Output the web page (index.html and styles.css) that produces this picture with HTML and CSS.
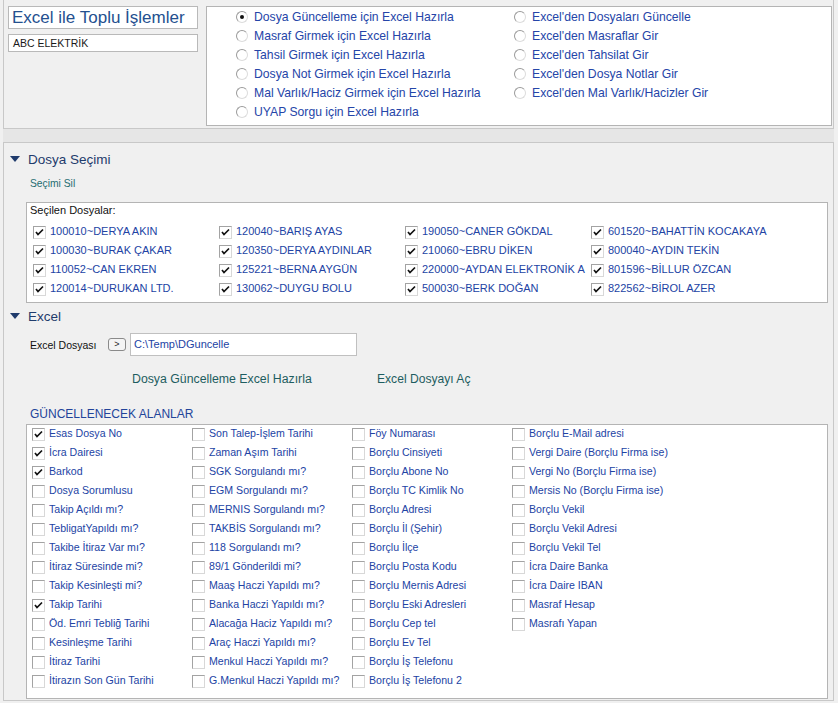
FILE: index.html
```html
<!DOCTYPE html>
<html lang="tr">
<head>
<meta charset="utf-8">
<title>Excel ile Toplu İşlemler</title>
<link rel="stylesheet" href="styles.css">
</head>
<body>
<div class="top">
  <div class="leftcol">
    <div class="titlebox">Excel ile Toplu İşlemler</div>
    <div class="firmbox">ABC ELEKTRİK</div>
  </div>
  <div class="radiobox">
    <label class="rad"><span class="rb on"></span>Dosya Güncelleme için Excel Hazırla</label>
    <label class="rad"><span class="rb"></span>Masraf Girmek için Excel Hazırla</label>
    <label class="rad"><span class="rb"></span>Tahsil Girmek için Excel Hazırla</label>
    <label class="rad"><span class="rb"></span>Dosya Not Girmek için Excel Hazırla</label>
    <label class="rad"><span class="rb"></span>Mal Varlık/Haciz Girmek için Excel Hazırla</label>
    <label class="rad"><span class="rb"></span>UYAP Sorgu için Excel Hazırla</label>
    <label class="rad"><span class="rb"></span>Excel'den Dosyaları Güncelle</label>
    <label class="rad"><span class="rb"></span>Excel'den Masraflar Gir</label>
    <label class="rad"><span class="rb"></span>Excel'den Tahsilat Gir</label>
    <label class="rad"><span class="rb"></span>Excel'den Dosya Notlar Gir</label>
    <label class="rad"><span class="rb"></span>Excel'den Mal Varlık/Hacizler Gir</label>
  </div>
</div>
<div class="band"></div>
<div class="main">
  <div class="sechead"><span class="tri"></span>Dosya Seçimi</div>
  <div class="link sil">Seçimi Sil</div>
  <div class="filesbox">
    <div class="fileslabel">Seçilen Dosyalar:</div>
    <div class="filesgrid">
      <label class="item"><span class="cb on"><svg viewBox="0 0 11 11"><polyline points="2,5 4,7.5 9,2.5"/></svg></span>100010~DERYA AKIN</label>
      <label class="item"><span class="cb on"><svg viewBox="0 0 11 11"><polyline points="2,5 4,7.5 9,2.5"/></svg></span>100030~BURAK ÇAKAR</label>
      <label class="item"><span class="cb on"><svg viewBox="0 0 11 11"><polyline points="2,5 4,7.5 9,2.5"/></svg></span>110052~CAN EKREN</label>
      <label class="item"><span class="cb on"><svg viewBox="0 0 11 11"><polyline points="2,5 4,7.5 9,2.5"/></svg></span>120014~DURUKAN LTD.</label>
      <label class="item"><span class="cb on"><svg viewBox="0 0 11 11"><polyline points="2,5 4,7.5 9,2.5"/></svg></span>120040~BARIŞ AYAS</label>
      <label class="item"><span class="cb on"><svg viewBox="0 0 11 11"><polyline points="2,5 4,7.5 9,2.5"/></svg></span>120350~DERYA AYDINLAR</label>
      <label class="item"><span class="cb on"><svg viewBox="0 0 11 11"><polyline points="2,5 4,7.5 9,2.5"/></svg></span>125221~BERNA AYGÜN</label>
      <label class="item"><span class="cb on"><svg viewBox="0 0 11 11"><polyline points="2,5 4,7.5 9,2.5"/></svg></span>130062~DUYGU BOLU</label>
      <label class="item"><span class="cb on"><svg viewBox="0 0 11 11"><polyline points="2,5 4,7.5 9,2.5"/></svg></span>190050~CANER GÖKDAL</label>
      <label class="item"><span class="cb on"><svg viewBox="0 0 11 11"><polyline points="2,5 4,7.5 9,2.5"/></svg></span>210060~EBRU DİKEN</label>
      <label class="item"><span class="cb on"><svg viewBox="0 0 11 11"><polyline points="2,5 4,7.5 9,2.5"/></svg></span>220000~AYDAN ELEKTRONİK A</label>
      <label class="item"><span class="cb on"><svg viewBox="0 0 11 11"><polyline points="2,5 4,7.5 9,2.5"/></svg></span>500030~BERK DOĞAN</label>
      <label class="item"><span class="cb on"><svg viewBox="0 0 11 11"><polyline points="2,5 4,7.5 9,2.5"/></svg></span>601520~BAHATTİN KOCAKAYA</label>
      <label class="item"><span class="cb on"><svg viewBox="0 0 11 11"><polyline points="2,5 4,7.5 9,2.5"/></svg></span>800040~AYDIN TEKİN</label>
      <label class="item"><span class="cb on"><svg viewBox="0 0 11 11"><polyline points="2,5 4,7.5 9,2.5"/></svg></span>801596~BİLLUR ÖZCAN</label>
      <label class="item"><span class="cb on"><svg viewBox="0 0 11 11"><polyline points="2,5 4,7.5 9,2.5"/></svg></span>822562~BİROL AZER</label>
    </div>
  </div>
  <div class="sechead excelhead"><span class="tri"></span>Excel</div>
  <div class="filerow">
    <span class="flabel">Excel Dosyası</span>
    <span class="smallbtn">&gt;</span>
    <span class="pathbox">C:\Temp\DGuncelle</span>
  </div>
  <div class="actions">
    <span class="link act1">Dosya Güncelleme Excel Hazırla</span>
    <span class="link act2">Excel Dosyayı Aç</span>
  </div>
  <div class="fieldshead">GÜNCELLENECEK ALANLAR</div>
  <div class="fieldsbox">
    <label class="item"><span class="cb on"><svg viewBox="0 0 11 11"><polyline points="2,5 4,7.5 9,2.5"/></svg></span>Esas Dosya No</label>
    <label class="item"><span class="cb on"><svg viewBox="0 0 11 11"><polyline points="2,5 4,7.5 9,2.5"/></svg></span>İcra Dairesi</label>
    <label class="item"><span class="cb on"><svg viewBox="0 0 11 11"><polyline points="2,5 4,7.5 9,2.5"/></svg></span>Barkod</label>
    <label class="item"><span class="cb"></span>Dosya Sorumlusu</label>
    <label class="item"><span class="cb"></span>Takip Açıldı mı?</label>
    <label class="item"><span class="cb"></span>TebligatYapıldı mı?</label>
    <label class="item"><span class="cb"></span>Takibe İtiraz Var mı?</label>
    <label class="item"><span class="cb"></span>İtiraz Süresinde mi?</label>
    <label class="item"><span class="cb"></span>Takip Kesinleşti mi?</label>
    <label class="item"><span class="cb on"><svg viewBox="0 0 11 11"><polyline points="2,5 4,7.5 9,2.5"/></svg></span>Takip Tarihi</label>
    <label class="item"><span class="cb"></span>Öd. Emri Tebliğ Tarihi</label>
    <label class="item"><span class="cb"></span>Kesinleşme Tarihi</label>
    <label class="item"><span class="cb"></span>İtiraz Tarihi</label>
    <label class="item"><span class="cb"></span>İtirazın Son Gün Tarihi</label>

    <label class="item"><span class="cb"></span>Son Talep-İşlem Tarihi</label>
    <label class="item"><span class="cb"></span>Zaman Aşım Tarihi</label>
    <label class="item"><span class="cb"></span>SGK Sorgulandı mı?</label>
    <label class="item"><span class="cb"></span>EGM Sorgulandı mı?</label>
    <label class="item"><span class="cb"></span>MERNIS Sorgulandı mı?</label>
    <label class="item"><span class="cb"></span>TAKBİS Sorgulandı mı?</label>
    <label class="item"><span class="cb"></span>118 Sorgulandı mı?</label>
    <label class="item"><span class="cb"></span>89/1 Gönderildi mi?</label>
    <label class="item"><span class="cb"></span>Maaş Haczi Yapıldı mı?</label>
    <label class="item"><span class="cb"></span>Banka Haczi Yapıldı mı?</label>
    <label class="item"><span class="cb"></span>Alacağa Haciz Yapıldı mı?</label>
    <label class="item"><span class="cb"></span>Araç Haczi Yapıldı mı?</label>
    <label class="item"><span class="cb"></span>Menkul Haczi Yapıldı mı?</label>
    <label class="item"><span class="cb"></span>G.Menkul Haczi Yapıldı mı?</label>

    <label class="item"><span class="cb"></span>Föy Numarası</label>
    <label class="item"><span class="cb"></span>Borçlu Cinsiyeti</label>
    <label class="item"><span class="cb"></span>Borçlu Abone No</label>
    <label class="item"><span class="cb"></span>Borçlu TC Kimlik No</label>
    <label class="item"><span class="cb"></span>Borçlu Adresi</label>
    <label class="item"><span class="cb"></span>Borçlu İl (Şehir)</label>
    <label class="item"><span class="cb"></span>Borçlu İlçe</label>
    <label class="item"><span class="cb"></span>Borçlu Posta Kodu</label>
    <label class="item"><span class="cb"></span>Borçlu Mernis Adresi</label>
    <label class="item"><span class="cb"></span>Borçlu Eski Adresleri</label>
    <label class="item"><span class="cb"></span>Borçlu Cep tel</label>
    <label class="item"><span class="cb"></span>Borçlu Ev Tel</label>
    <label class="item"><span class="cb"></span>Borçlu İş Telefonu</label>
    <label class="item"><span class="cb"></span>Borçlu İş Telefonu 2</label>

    <label class="item"><span class="cb"></span>Borçlu E-Mail adresi</label>
    <label class="item"><span class="cb"></span>Vergi Daire (Borçlu Firma ise)</label>
    <label class="item"><span class="cb"></span>Vergi No (Borçlu Firma ise)</label>
    <label class="item"><span class="cb"></span>Mersis No (Borçlu Firma ise)</label>
    <label class="item"><span class="cb"></span>Borçlu Vekil</label>
    <label class="item"><span class="cb"></span>Borçlu Vekil Adresi</label>
    <label class="item"><span class="cb"></span>Borçlu Vekil Tel</label>
    <label class="item"><span class="cb"></span>İcra Daire Banka</label>
    <label class="item"><span class="cb"></span>İcra Daire IBAN</label>
    <label class="item"><span class="cb"></span>Masraf Hesap</label>
    <label class="item"><span class="cb"></span>Masrafı Yapan</label>
  </div>
</div>
</body>
</html>
```

FILE: styles.css
```css
html, body {
  margin: 0;
  padding: 0;
}
body {
  background: #f0f0f0;
  font-family: "Liberation Sans", Arial, sans-serif;
  font-size: 11px;
  width: 838px;
  height: 703px;
  overflow: hidden;
  color: #000;
}
label { cursor: default; }

/* ---------- top panel ---------- */
.top {
  box-sizing: border-box;
  margin-left: 3px;
  width: 831px;
  height: 129px;
  border: 1px solid #c8c8c8;
  border-top: none;
  padding: 6px 1px 0 4px;
  display: flex;
  gap: 8px;
  align-items: flex-start;
}
.leftcol {
  width: 190px;
  display: flex;
  flex-direction: column;
  gap: 5px;
}
.titlebox {
  box-sizing: border-box;
  height: 23px;
  background: #fff;
  border: 1px solid #b9b9b9;
  color: #24508f;
  font-size: 17px;
  line-height: 21px;
  padding-left: 3px;
  white-space: nowrap;
}
.firmbox {
  box-sizing: border-box;
  height: 18px;
  background: #fff;
  border: 1px solid #b9b9b9;
  color: #1a1a1a;
  font-size: 10.5px;
  line-height: 16px;
  padding-left: 4px;
}
.radiobox {
  box-sizing: border-box;
  flex: 1;
  height: 120px;
  background: #fff;
  border: 1px solid #b4b4b4;
  padding: 0 0 0 29px;
  display: grid;
  grid-auto-flow: column;
  grid-template-rows: repeat(6, 19px);
  grid-template-columns: 278px 1fr;
}
.rad {
  display: flex;
  align-items: center;
  gap: 6px;
  color: #2545a8;
  font-size: 12.2px;
  white-space: nowrap;
}
.rb {
  box-sizing: border-box;
  width: 12px;
  height: 12px;
  border-radius: 50%;
  border: 1px solid #9a9a9a;
  border-right-color: #dcdcdc;
  border-bottom-color: #dcdcdc;
  background: #fff;
  position: relative;
  flex: none;
}
.rb.on::after {
  content: "";
  position: absolute;
  left: 3px;
  top: 3px;
  width: 4px;
  height: 4px;
  border-radius: 50%;
  background: #111;
}

.band {
  height: 13px;
  background: #e6e6e6;
  margin-left: 3px;
  width: 831px;
}

/* ---------- main panel ---------- */
.main {
  box-sizing: border-box;
  margin-left: 3px;
  width: 831px;
  height: 559px;
  border: 1px solid #c8c8c8;
  padding: 7px 0 0 0;
}
.sechead {
  height: 18px;
  display: flex;
  align-items: center;
  color: #1f3b6c;
  font-size: 13.5px;
  padding-left: 6px;
}
.tri {
  width: 0;
  height: 0;
  border-left: 5px solid transparent;
  border-right: 5px solid transparent;
  border-top: 6px solid #1f3b6c;
  margin-right: 8px;
}
.link {
  color: #256d70;
}
.sil {
  display: block;
  margin: 8px 0 0 26px;
  height: 16px;
  line-height: 16px;
  font-size: 10.3px;
}
.filesbox {
  box-sizing: border-box;
  margin: 10px 0 0 22px;
  width: 802px;
  height: 101px;
  background: #fff;
  border: 1px solid #b4b4b4;
  padding: 0 0 0 6px;
}
.fileslabel {
  height: 18px;
  line-height: 14px;
  margin-left: -3px;
  color: #111;
}
.filesgrid {
  display: grid;
  grid-auto-flow: column;
  grid-template-rows: repeat(4, 19px);
  grid-template-columns: repeat(4, 186px);
}
.item {
  display: flex;
  align-items: center;
  gap: 4px;
  color: #2243a4;
  font-size: 11px;
  white-space: nowrap;
}
.cb {
  box-sizing: border-box;
  width: 13px;
  height: 13px;
  margin-top: 3px;
  border: 1px solid #a3a3a3;
  border-right-color: #d8d8d8;
  border-bottom-color: #d8d8d8;
  background: #fff;
  flex: none;
  display: flex;
}
.cb svg {
  width: 11px;
  height: 11px;
  fill: none;
  stroke: #111;
  stroke-width: 1.7;
}
.excelhead {
  margin-top: 4px;
}
.filerow {
  margin: 8px 0 0 26px;
  height: 23px;
  display: flex;
  align-items: center;
}
.flabel {
  color: #111;
  font-size: 10.5px;
  width: 76px;
  padding-top: 1px;
}
.smallbtn {
  box-sizing: border-box;
  width: 18px;
  height: 13px;
  border: 1px solid #8a8a8a;
  border-radius: 3px;
  background: #f4f4f4;
  font-size: 9px;
  line-height: 11px;
  text-align: center;
  color: #222;
  margin-left: 2px;
}
.pathbox {
  box-sizing: border-box;
  margin-left: 4px;
  width: 227px;
  height: 23px;
  background: #fff;
  border: 1px solid #c0c0c0;
  color: #2243a4;
  font-size: 11px;
  line-height: 21px;
  padding-left: 3px;
}
.actions {
  margin: 15px 0 0 128px;
  height: 16px;
  display: flex;
  align-items: center;
}
.act1 {
  width: 245px;
  font-size: 12.3px;
  color: #1e5d60;
}
.act2 {
  font-size: 12.1px;
  color: #1e5d60;
}
.fieldshead {
  margin: 19px 0 0 26px;
  height: 16px;
  line-height: 16px;
  color: #22449a;
  font-size: 12px;
}
.fieldsbox {
  box-sizing: border-box;
  margin: 2px 0 0 22px;
  width: 802px;
  height: 275px;
  background: #fff;
  border: 1px solid #b4b4b4;
  padding: 0 0 0 5px;
  display: grid;
  grid-auto-flow: column;
  grid-template-rows: repeat(14, 19px);
  grid-template-columns: repeat(4, 160px);
}
.fieldsbox .item {
  font-size: 10.6px;
  padding-bottom: 4px;
}
```
